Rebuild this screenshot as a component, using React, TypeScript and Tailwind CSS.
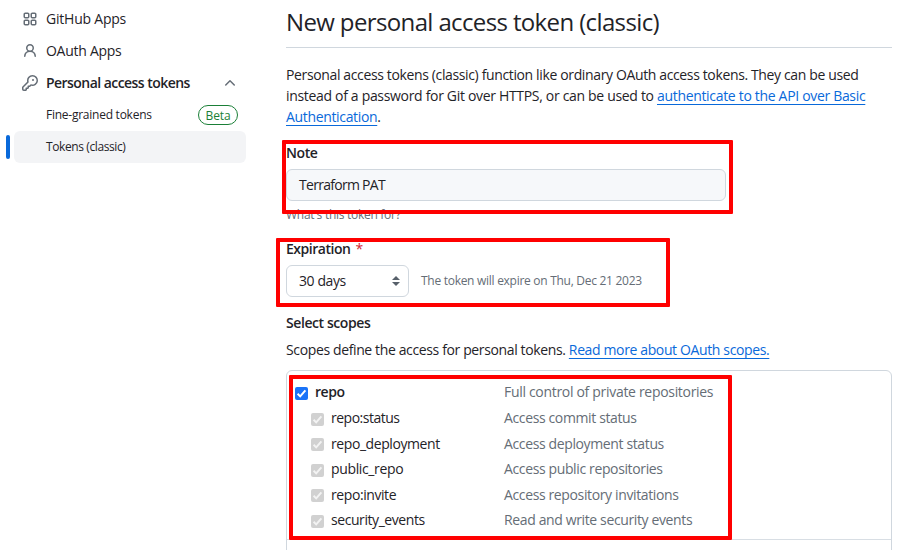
import type { ReactNode } from "react";

const scopes = [
  { name: "repo:status", text: "Access commit status", row: "h-[26px]", track: "tracking-[-0.5px]" },
  { name: "repo_deployment", text: "Access deployment status", row: "h-[25px]", track: "tracking-[-0.42px]" },
  { name: "public_repo", text: "Access public repositories", row: "h-[26px]", track: "tracking-[-0.36px]" },
  { name: "repo:invite", text: "Access repository invitations", row: "h-[25px]", track: "tracking-[-0.42px]" },
  { name: "security_events", text: "Read and write security events", row: "h-[26px]", track: "tracking-[-0.43px]" },
];

const icons = {
  apps: "M1.5 3.25c0-.966.784-1.75 1.75-1.75h2.5c.966 0 1.75.784 1.75 1.75v2.5A1.75 1.75 0 0 1 5.75 7.5h-2.5A1.75 1.75 0 0 1 1.5 5.75Zm7 0c0-.966.784-1.75 1.75-1.75h2.5c.966 0 1.75.784 1.75 1.75v2.5a1.75 1.75 0 0 1-1.75 1.75h-2.5A1.75 1.75 0 0 1 8.5 5.75Zm-7 7c0-.966.784-1.75 1.75-1.75h2.5c.966 0 1.75.784 1.75 1.75v2.5a1.75 1.75 0 0 1-1.75 1.75h-2.5a1.75 1.75 0 0 1-1.75-1.75Zm7 0c0-.966.784-1.75 1.75-1.75h2.5c.966 0 1.75.784 1.75 1.75v2.5a1.75 1.75 0 0 1-1.75 1.75h-2.5a1.75 1.75 0 0 1-1.75-1.75ZM3.25 3a.25.25 0 0 0-.25.25v2.5c0 .138.112.25.25.25h2.5A.25.25 0 0 0 6 5.75v-2.5A.25.25 0 0 0 5.75 3Zm7 0a.25.25 0 0 0-.25.25v2.5c0 .138.112.25.25.25h2.5a.25.25 0 0 0 .25-.25v-2.5a.25.25 0 0 0-.25-.25Zm-7 7a.25.25 0 0 0-.25.25v2.5c0 .138.112.25.25.25h2.5a.25.25 0 0 0 .25-.25v-2.5a.25.25 0 0 0-.25-.25Zm7 0a.25.25 0 0 0-.25.25v2.5c0 .138.112.25.25.25h2.5a.25.25 0 0 0 .25-.25v-2.5a.25.25 0 0 0-.25-.25Z",
  person:
    "M10.561 8.073a6.005 6.005 0 0 1 3.432 5.142.75.75 0 1 1-1.498.07 4.5 4.5 0 0 0-8.99 0 .75.75 0 0 1-1.498-.07 6.004 6.004 0 0 1 3.431-5.142 3.999 3.999 0 1 1 5.123 0ZM10.5 5a2.5 2.5 0 1 0-5 0 2.5 2.5 0 0 0 5 0Z",
  key: "M10.5 0a5.499 5.499 0 1 1-1.288 10.848l-.932.932a.749.749 0 0 1-.53.22H7v.75a.749.749 0 0 1-.22.53l-.5.5a.749.749 0 0 1-.53.22H5v.75a.749.749 0 0 1-.22.53l-.5.5a.749.749 0 0 1-.53.22h-2A1.75 1.75 0 0 1 0 14.25v-2c0-.199.079-.389.22-.53l4.932-4.932A5.5 5.5 0 0 1 10.5 0Zm-4 5.5c-.001.431.069.86.205 1.269a.75.75 0 0 1-.181.768L1.5 12.56v1.69c0 .138.112.25.25.25h1.69l.06-.06v-1.19a.75.75 0 0 1 .75-.75h1.19l.06-.06v-1.19a.75.75 0 0 1 .75-.75h1.19l1.023-1.025a.75.75 0 0 1 .768-.18A4 4 0 1 0 6.5 5.5ZM11 6a1 1 0 1 1 0-2 1 1 0 0 1 0 2Z",
  chevronUp:
    "M3.22 10.53a.749.749 0 0 1 0-1.06l4.25-4.25a.749.749 0 0 1 1.06 0l4.25 4.25a.749.749 0 1 1-1.06 1.06L8 6.811 4.28 10.53a.749.749 0 0 1-1.06 0Z",
};

function Icon({ name }: { name: keyof typeof icons }) {
  return (
    <svg viewBox="0 0 16 16" className="size-4 shrink-0 text-[#656d76]" fill="currentColor">
      <path d={icons[name]} />
    </svg>
  );
}

function Check({ disabled = false }: { disabled?: boolean }) {
  return (
    <span
      className={`mt-0.5 size-[13px] shrink-0 rounded-[2px] ${
        disabled ? "bg-[#d1d1d1] text-[#f3f3f3]" : "bg-[#1a73f8] text-white"
      }`}
    >
      <svg viewBox="0 0 13 13" className="size-[13px]" fill="none" stroke="currentColor" strokeWidth="2">
        <path d="M2.6 6.8 5.2 9.4 10.4 3.4" />
      </svg>
    </span>
  );
}

function Link({ children }: { children: ReactNode }) {
  return (
    <a className="text-[#0969da] underline decoration-1 underline-offset-[3px]" href="#">
      {children}
    </a>
  );
}

function Sidebar() {
  return (
    <nav className="w-[246px] shrink-0 pt-[3px] text-sm">
      <div className="flex h-8 items-center pl-[22px]">
        <Icon name="apps" />
        <span className="ml-2 tracking-[-0.22px]">GitHub Apps</span>
      </div>
      <div className="flex h-8 items-center pl-[22px]">
        <Icon name="person" />
        <span className="ml-2 tracking-[-0.27px]">OAuth Apps</span>
      </div>
      <div className="flex h-8 items-center pl-[22px] pr-2">
        <Icon name="key" />
        <span className="ml-2 mr-auto font-semibold tracking-[-0.55px]">Personal access tokens</span>
        <Icon name="chevronUp" />
      </div>
      <div className="flex h-8 items-center pl-[46px] pr-2 text-xs">
        <span className="tracking-[-0.25px]">Fine-grained tokens</span>
        <span className="ml-auto flex h-5 w-10 items-center justify-center rounded-full border border-[#1a7f37] pt-px font-medium tracking-[-0.15px] text-[#1a7f37]">
          Beta
        </span>
      </div>
      <div className="flex h-8 items-center pl-1.5 text-xs">
        <span className="h-6 w-1 rounded-md bg-[#0969da]" />
        <span className="ml-1 flex h-8 flex-1 items-center rounded-md bg-[#f3f4f6] pl-8 tracking-[-0.4px]">
          Tokens (classic)
        </span>
      </div>
    </nav>
  );
}

export default function App() {
  return (
    <div className="flex h-[550px] w-[920px] overflow-hidden bg-white font-['Open_Sans','Noto_Sans',sans-serif] text-[#1f2328]">
      <Sidebar />
      <main className="ml-10 w-[606px] shrink-0 text-sm">
        <h1 className="flex h-12 items-center border-b border-[#d0d7de] pb-[3px] text-2xl tracking-[-0.63px]">
          New personal access token (classic)
        </h1>
        <p className="mt-4 whitespace-nowrap leading-[21px]">
          <span className="tracking-[-0.365px]">
            Personal access tokens (classic) function like ordinary OAuth access tokens. They can be used
          </span>
          <br />
          <span className="tracking-[-0.32px]">
            instead of a password for Git over HTTPS, or can be used to <Link>authenticate to the API over Basic</Link>
          </span>
          <br />
          <span className="tracking-[-0.34px]">
            <Link>Authentication</Link>.
          </span>
        </p>

        <section className="relative mt-[15px] h-[82px]">
          <label className="block h-[21px] font-semibold leading-[21px] tracking-[-0.4px]">Note</label>
          <div className="mt-1.5 flex h-8 w-[440px] items-center rounded-md border border-[#d0d7de] bg-[#f6f8fa] px-3 tracking-[-0.72px]">
            Terraform PAT
          </div>
          <p className="mt-[5px] text-xs leading-[18px] tracking-[-0.28px] text-[#656d76]">
            What's this token for?
          </p>
          <div className="absolute -left-1 -top-0.5 h-[74px] w-[451px] rounded-[1px] border-4 border-[#ff0000]" />
        </section>

        <section className="relative mt-3.5 h-[59px]">
          <label className="block h-[21px] font-semibold leading-[21px] tracking-[-0.48px]">
            Expiration <span className="ml-0.5 font-normal text-[#d1242f]">*</span>
          </label>
          <div className="mt-1.5 flex items-center">
            <div className="flex h-8 w-[123px] items-center justify-between rounded-md border border-[#d0d7de] pl-3 pr-2 tracking-[-0.42px]">
              30 days
              <svg viewBox="0 0 8 10" className="h-2.5 w-2" fill="#57606a">
                <path d="M4 0 8 4H0ZM4 10 0 6H8Z" />
              </svg>
            </div>
            <span className="ml-3 text-xs tracking-[-0.28px] text-[#656d76]">
              The token will expire on Thu, Dec 21 2023
            </span>
          </div>
          <div className="absolute -left-2.5 top-0 h-[69px] w-[394px] rounded-[1px] border-4 border-[#ff0000]" />
        </section>

        <h2 className="mt-[15px] font-semibold leading-[21px] tracking-[-0.42px]">Select scopes</h2>
        <p className="mt-1.5 whitespace-nowrap leading-[21px] tracking-[-0.37px]">
          Scopes define the access for personal tokens. <Link>Read more about OAuth scopes.</Link>
        </p>

        <section className="relative mt-2.5 h-[200px] rounded-md border border-[#d0d7de]">
          <div className="h-[169px] border-b border-[#d8dee4] pl-2 pt-2">
            <div className="flex h-[26px] items-center">
              <Check />
              <span className="ml-[7px] w-[189px] font-semibold tracking-[-0.45px]">repo</span>
              <span className="tracking-[-0.31px] text-[#656d76]">Full control of private repositories</span>
            </div>
            {scopes.map((s) => (
              <div key={s.name} className={`flex items-center pl-4 ${s.row}`}>
                <Check disabled />
                <span className={`ml-[7px] w-[173px] ${s.track}`}>{s.name}</span>
                <span className="tracking-[-0.37px] text-[#656d76]">{s.text}</span>
              </div>
            ))}
          </div>
          <div className="absolute left-0.5 top-1 h-[165px] w-[443px] rounded-[1px] border-4 border-[#ff0000]" />
        </section>
      </main>
    </div>
  );
}
